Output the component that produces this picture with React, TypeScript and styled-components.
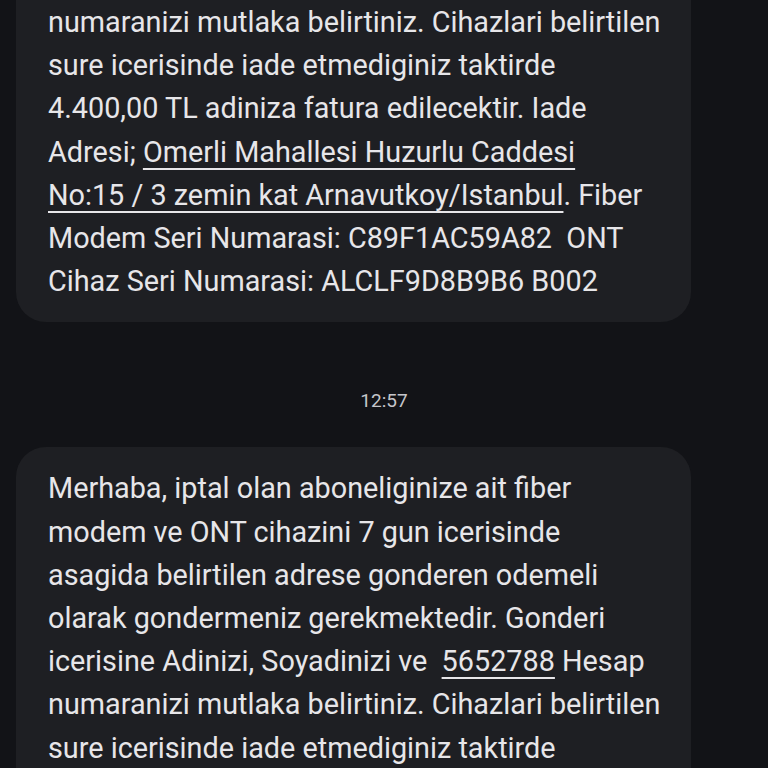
import React from "react";
import styled, { createGlobalStyle } from "styled-components";

type Segment = { text: string; link?: boolean };
type Message = { id: string; lines: Segment[][]; cut?: "top" | "bottom" };

const GlobalStyle = createGlobalStyle`
  html, body {
    margin: 0;
    padding: 0;
    background: #121317;
    overflow: hidden;
  }
`;

const Screen = styled.div`
  width: 768px;
  height: 768px;
  overflow: hidden;
  background: #121317;
  display: flex;
  flex-direction: column;
  font-family: Roboto, "Noto Sans", sans-serif;
`;

const Bubble = styled.div<{ $cut?: "top" | "bottom" }>`
  width: 675px;
  margin-left: 16px;
  box-sizing: border-box;
  background: #1e1f23;
  color: #e7e6e9;
  font-size: 28.8px;
  line-height: 43.2px;
  padding: ${p =>
    p.$cut === "top" ? "1px 32px 19px" : p.$cut === "bottom" ? "20px 32px 0" : "20px 32px 19px"};
  border-radius: ${p =>
    p.$cut === "top" ? "0 0 30px 30px" : p.$cut === "bottom" ? "30px 30px 0 0" : "30px"};
  flex-shrink: 0;
`;

const Line = styled.div`
  white-space: pre;
`;

const Link = styled.span`
  text-decoration: underline;
  text-decoration-thickness: 2px;
  text-underline-offset: 6px;
`;

const Stamp = styled.div`
  padding: 68px 0 35px;
  text-align: center;
  color: #c5c6ca;
  font-size: 19px;
  line-height: 22px;
  flex-shrink: 0;
`;

const first: Message = {
  id: "m1",
  cut: "top",
  lines: [
    [{ text: "numaranizi mutlaka belirtiniz. Cihazlari belirtilen" }],
    [{ text: "sure icerisinde iade etmediginiz taktirde" }],
    [{ text: "4.400,00 TL adiniza fatura edilecektir. Iade" }],
    [{ text: "Adresi; " }, { text: "Omerli Mahallesi Huzurlu Caddesi", link: true }],
    [{ text: "No:15 / 3 zemin kat Arnavutkoy/Istanbul", link: true }, { text: ". Fiber" }],
    [{ text: "Modem Seri Numarasi: C89F1AC59A82  ONT" }],
    [{ text: "Cihaz Seri Numarasi: ALCLF9D8B9B6 B002" }],
  ],
};

const second: Message = {
  id: "m2",
  cut: "bottom",
  lines: [
    [{ text: "Merhaba, iptal olan aboneliginize ait fiber" }],
    [{ text: "modem ve ONT cihazini 7 gun icerisinde" }],
    [{ text: "asagida belirtilen adrese gonderen odemeli" }],
    [{ text: "olarak gondermeniz gerekmektedir. Gonderi" }],
    [{ text: "icerisine Adinizi, Soyadinizi ve  " }, { text: "5652788", link: true }, { text: " Hesap" }],
    [{ text: "numaranizi mutlaka belirtiniz. Cihazlari belirtilen" }],
    [{ text: "sure icerisinde iade etmediginiz taktirde" }],
  ],
};

const MessageBubble: React.FC<{ msg: Message }> = ({ msg }) => (
  <Bubble $cut={msg.cut}>
    {msg.lines.map((line, i) => (
      <Line key={i}>
        {line.map((seg, j) =>
          seg.link ? <Link key={j}>{seg.text}</Link> : <span key={j}>{seg.text}</span>
        )}
      </Line>
    ))}
  </Bubble>
);

export default function App() {
  return (
    <>
      <GlobalStyle />
      <Screen>
        <MessageBubble msg={first} />
        <Stamp>12:57</Stamp>
        <MessageBubble msg={second} />
      </Screen>
    </>
  );
}
